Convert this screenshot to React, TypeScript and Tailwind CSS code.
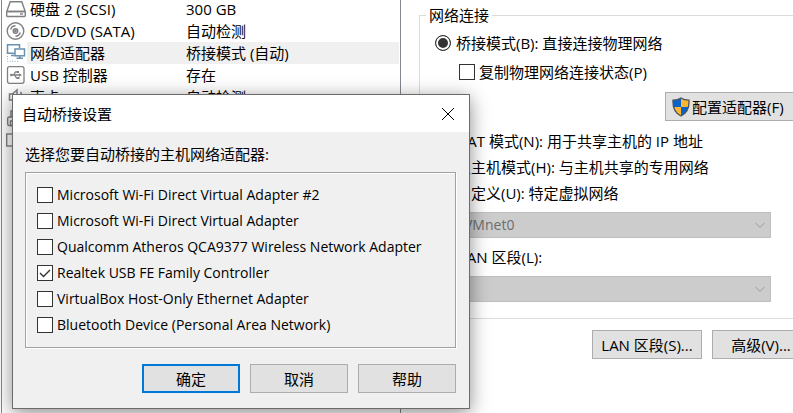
import { useState } from 'react';
import type { ReactNode } from 'react';

const devices = [
  { id: 'disk', icon: <DiskIcon />, name: '硬盘 2 (SCSI)', summary: '300 GB' },
  { id: 'cd', icon: <DiscIcon />, name: 'CD/DVD (SATA)', summary: '自动检测' },
  { id: 'network', icon: <NetworkIcon />, name: '网络适配器', summary: '桥接模式 (自动)', selected: true },
  { id: 'usb', icon: <UsbIcon />, name: 'USB 控制器', summary: '存在' },
  { id: 'sound', icon: <SoundIcon />, name: '声卡', summary: '自动检测' },
  { id: 'printer', icon: <PrinterIcon />, name: '', summary: '' },
  { id: 'display', icon: <DisplayIcon />, name: '', summary: '' },
];

const adapters = [
  { name: 'Microsoft Wi-Fi Direct Virtual Adapter #2', checked: false },
  { name: 'Microsoft Wi-Fi Direct Virtual Adapter', checked: false },
  { name: 'Qualcomm Atheros QCA9377 Wireless Network Adapter', checked: false },
  { name: 'Realtek USB FE Family Controller', checked: true },
  { name: 'VirtualBox Host-Only Ethernet Adapter', checked: false },
  { name: 'Bluetooth Device (Personal Area Network)', checked: false },
];

const modes = [
  { id: 'nat', label: 'NAT 模式(N): 用于共享主机的 IP 地址' },
  { id: 'host', label: '仅主机模式(H): 与主机共享的专用网络' },
  { id: 'custom', label: '自定义(U): 特定虚拟网络' },
];

function DiskIcon() {
  return (
    <svg width="22" height="20" viewBox="0 0 22 20" fill="none" stroke="#808080" strokeWidth="1.4">
      <path d="M5.200 2.700h11.600l3.400 9.800H1.800z" strokeLinejoin="round" />
      <rect x="1.700" y="12.500" width="18.600" height="5" rx="1" />
      <path d="M15 15h3" />
    </svg>
  );
}

function DiscIcon() {
  return (
    <svg width="22" height="20" viewBox="0 0 22 20" fill="none" stroke="#808080" strokeWidth="1.4">
      <circle cx="10.500" cy="10" r="8.300" />
      <circle cx="10.500" cy="10" r="2.300" />
      <circle cx="10.500" cy="10" r="0.700" fill="#808080" />
      <path d="M10.500 4.800a5.200 5.200 0 0 0-4.800 3.700M10.500 15.200a5.200 5.200 0 0 0 4.800-3.700" />
    </svg>
  );
}

function NetworkIcon() {
  return (
    <svg width="22" height="20" viewBox="0 0 22 20" fill="none" stroke="#6890b0" strokeWidth="1.5">
      <path d="M9.500 10.200H2.500V1.800h12v3.500M6 12.500h3.500" />
      <rect x="10" y="6" width="9.500" height="6.800" fill="#fff" />
      <path d="M14.700 13v2M11.500 15.200h6.500" />
      <path d="M2.500 13v5.300H14" stroke="#8fa9be" strokeWidth="1" strokeDasharray="1 1.500" />
    </svg>
  );
}

function UsbIcon() {
  return (
    <svg width="22" height="20" viewBox="0 0 22 20" fill="none" stroke="#808080" strokeWidth="1.3">
      <rect x="2.500" y="1.700" width="16.500" height="16.600" rx="2" />
      <path d="M6 10h9M8.500 10l2-3h2M9.500 10l2 3h1.500" />
      <circle cx="6.300" cy="10" r="1.300" fill="#808080" stroke="none" />
      <path d="M14 8.200l3 1.800-3 1.800z" fill="#808080" stroke="none" />
      <path d="M12 6h2v2h-2zM12.500 12h2v2h-2z" fill="#808080" stroke="none" />
    </svg>
  );
}

function SoundIcon() {
  return (
    <svg width="22" height="20" viewBox="0 0 22 20" fill="none" stroke="#808080" strokeWidth="1.500">
      <path d="M4.500 7h3l4.500-4v14l-4.500-4h-3z" />
      <path d="M15.500 5c2 3 2 7 0 10" />
    </svg>
  );
}

function PrinterIcon() {
  return (
    <svg width="22" height="20" viewBox="0 0 22 20" fill="none" stroke="#808080" strokeWidth="1.4">
      <path d="M6 8V2h10v6" />
      <rect x="2.700" y="8" width="16" height="8.500" rx="1.500" />
      <path d="M5.500 12h10v4.500h-10z" />
    </svg>
  );
}

function DisplayIcon() {
  return (
    <svg width="22" height="20" viewBox="0 0 22 20" fill="none" stroke="#808080" strokeWidth="1.4">
      <rect x="1.700" y="3" width="18.500" height="12" />
      <path d="M11 15v3M7 18h8" />
    </svg>
  );
}

function ShieldIcon() {
  return (
    <svg className="shrink-0" width="18" height="20" viewBox="0 0 18 20">
      <path d="M9 1C7 2.500 4 3.200 1 3.200.6 10.500 2.500 16 9 19z" fill="#0a63c9" />
      <path d="M9 1c2 1.500 5 2.200 8 2.200C17.400 10.500 15.500 16 9 19z" fill="#fdb62f" />
      <path d="M9 10H1.600C2.600 14 4.800 17 9 19z" fill="#fdb62f" />
      <path d="M9 10h7.400C15.400 14 13.200 17 9 19z" fill="#0a63c9" />
      <path
        d="M9 1C7 2.500 4 3.200 1 3.200.6 10.500 2.500 16 9 19c6.500-3 8.400-8.500 8-15.800C14 3.200 11 2.500 9 1z"
        fill="none"
        stroke="#4b5563"
        strokeWidth="1.300"
      />
    </svg>
  );
}

type CheckItemProps = {
  label: string;
  defaultChecked?: boolean;
};

function CheckItem({ label, defaultChecked }: CheckItemProps) {
  return (
    <label className="flex h-[26px] items-center gap-1 whitespace-nowrap">
      <span className="relative flex">
        <input
          type="checkbox"
          defaultChecked={defaultChecked}
          className="peer size-4 appearance-none border border-[#333] bg-white"
        />
        <svg
          className="pointer-events-none absolute inset-0 hidden peer-checked:block"
          width="16"
          height="16"
          viewBox="0 0 16 16"
          fill="none"
          stroke="#333"
          strokeWidth="1.4"
        >
          <path d="M3 8l3.500 3.500L13 5" />
        </svg>
      </span>
      {label}
    </label>
  );
}

type ModeItemProps = {
  label: string;
  checked: boolean;
  onSelect: () => void;
};

function ModeItem({ label, checked, onSelect }: ModeItemProps) {
  return (
    <label className="flex h-[26px] items-center gap-[5px] whitespace-nowrap">
      <input
        type="radio"
        name="mode"
        checked={checked}
        onChange={onSelect}
        className="size-4 appearance-none rounded-full border border-[#333] bg-white checked:bg-[#333] checked:shadow-[inset_0_0_0_2px_#fff]"
      />
      {label}
    </label>
  );
}

function DisabledSelect({ id, value }: { id: string; value: string }) {
  return (
    <div className="relative">
      <select
        id={id}
        aria-label={value || undefined}
        disabled
        className="block h-[26px] w-full appearance-none border border-[#bfbfbf] bg-[#ccc] px-1 text-[14px] text-[#6d6d6d] opacity-100"
      >
        <option>{value}</option>
      </select>
      <svg
        className="pointer-events-none absolute top-2 right-1.5"
        width="10"
        height="10"
        viewBox="0 0 10 10"
        fill="none"
        stroke="#9a9a9a"
      >
        <path d="M0.500 3L5 7.500 9.500 3" />
      </svg>
    </div>
  );
}

function PushButton({ children, primary }: { children: ReactNode; primary?: boolean }) {
  return (
    <button
      type="button"
      className={
        primary
          ? 'h-[29px] w-[98px] border-2 border-[#0078d7] bg-[#e1e1e1]'
          : 'h-[29px] w-[98px] border border-[#adadad] bg-[#e1e1e1]'
      }
    >
      {children}
    </button>
  );
}

function BridgeDialog() {
  return (
    <div
      role="dialog"
      aria-labelledby="dialog-title"
      className="absolute top-[94px] left-3 w-[458px] border border-[#6b6b6b] bg-[#f0f0f0] shadow-[0_4px_18px_rgba(0,0,0,0.45)]"
    >
      <div className="flex h-[37px] items-center justify-between bg-white pr-[15px] pl-[9px]">
        <h2 id="dialog-title">自动桥接设置</h2>
        <button type="button" aria-label="关闭" className="flex">
          <svg width="12" height="12" viewBox="0 0 12 12" stroke="#000">
            <path d="M0 0l12 12M12 0L0 12" />
          </svg>
        </button>
      </div>
      <div className="pt-[11px] pr-[13px] pb-[15px] pl-3">
        <p className="h-[22px]">选择您要自动桥接的主机网络适配器:</p>
        <div className="mt-[7px] border border-[#a0a0a0] px-[11px] py-[9px] text-[14px] shadow-[1px_1px_0_#fff,inset_1px_1px_0_#fff]">
          {adapters.map((adapter) => (
            <CheckItem key={adapter.name} label={adapter.name} defaultChecked={adapter.checked} />
          ))}
        </div>
        <div className="mt-4 flex justify-end gap-[10px]">
          <PushButton primary>确定</PushButton>
          <PushButton>取消</PushButton>
          <PushButton>帮助</PushButton>
        </div>
      </div>
    </div>
  );
}

export default function App() {
  const [mode, setMode] = useState('bridged');

  return (
    <div className="relative flex h-screen overflow-hidden bg-white font-['Open_Sans','Noto_Sans_CJK_SC',sans-serif] text-[15px] leading-[22px] text-black">
      {/* Device list */}
      <aside className="ml-px w-[400px] shrink-0 overflow-hidden border-x border-[#828790]">
        <ul className="-mt-0.5 pr-px">
          {devices.map((device) => (
            <li key={device.id} className="flex h-[22px] items-center whitespace-nowrap">
              <span className="flex w-[25px] shrink-0 justify-end">{device.icon}</span>
              <span
                className={
                  device.selected
                    ? 'flex h-[22px] flex-1 items-center bg-[#f0f0f0] pl-[3px]'
                    : 'flex h-[22px] flex-1 items-center pl-[3px]'
                }
              >
                <span className="w-[156px]">{device.name}</span>
                <span>{device.summary}</span>
              </span>
            </li>
          ))}
        </ul>
      </aside>

      {/* Network settings */}
      <main className="-mr-[29px] flex-1 pt-1 pl-[18px]">
        <fieldset className="border border-[#dcdcdc] pr-[50px] pb-4 pl-[15px]">
          <legend className="-ml-[9px] px-[3px]">网络连接</legend>
          <div className="pt-1">
            <ModeItem
              label="桥接模式(B): 直接连接物理网络"
              checked={mode === 'bridged'}
              onSelect={() => setMode('bridged')}
            />
          </div>
          <div className="mt-[3px] pl-6">
            <CheckItem label="复制物理网络连接状态(P)" />
          </div>
          <div className="-mr-7 mt-[7px] flex justify-end">
            <button
              type="button"
              className="flex h-[29px] w-[134px] items-center gap-0.5 border border-[#adadad] bg-[#e1e1e1] pl-1.5 whitespace-nowrap"
            >
              <ShieldIcon />
              配置适配器(F)
            </button>
          </div>
          <div className="mt-[7px]">
            {modes.map((item) => (
              <ModeItem
                key={item.id}
                label={item.label}
                checked={mode === item.id}
                onSelect={() => setMode(item.id)}
              />
            ))}
          </div>
          <div className="mt-1.5 pl-6">
            <DisabledSelect id="vmnet" value="VMnet0" />
            <label htmlFor="segment" className="mt-1.5 mb-1.5 flex h-[26px] items-center">
              LAN 区段(L):
            </label>
            <DisabledSelect id="segment" value="" />
          </div>
        </fieldset>
        <div className="mt-[11px] flex justify-end gap-[10px] pr-3 whitespace-nowrap">
          <button type="button" className="h-[29px] w-[110px] border border-[#adadad] bg-[#e1e1e1]">
            LAN 区段(S)...
          </button>
          <button type="button" className="h-[29px] w-[98px] border border-[#adadad] bg-[#e1e1e1]">
            高级(V)...
          </button>
        </div>
      </main>

      <BridgeDialog />
    </div>
  );
}
